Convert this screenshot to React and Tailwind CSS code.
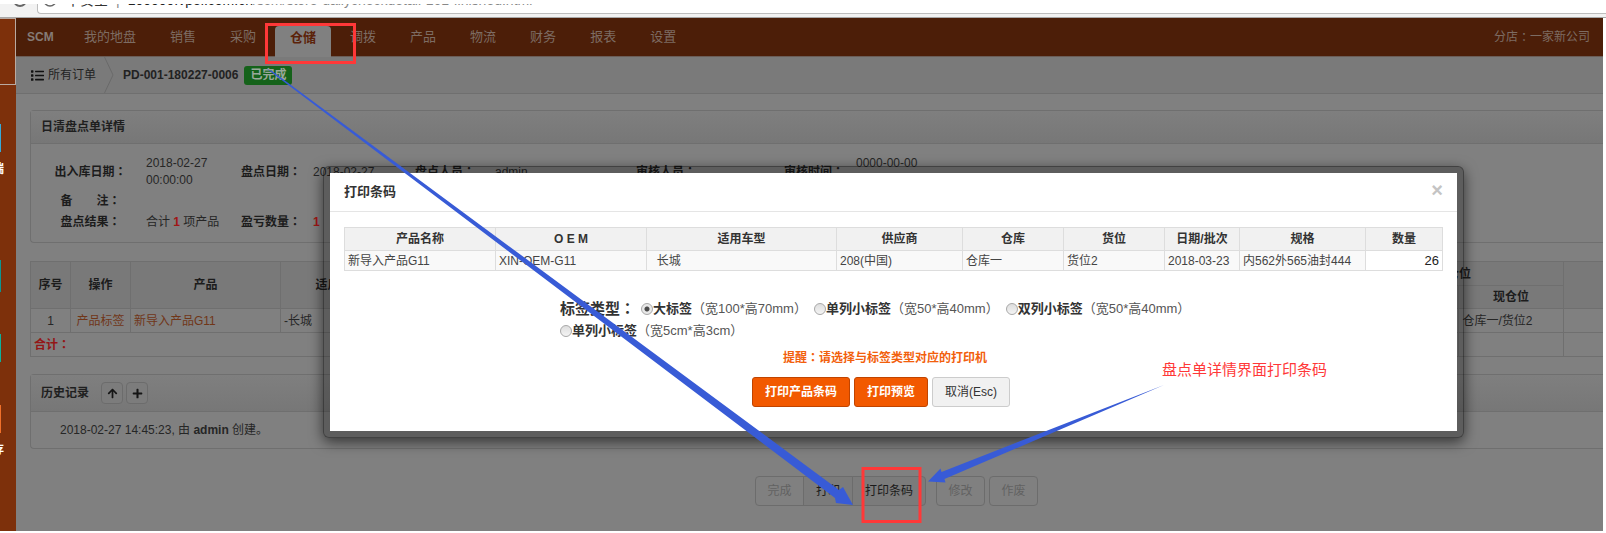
import React from "react";
import { FaList, FaArrowUp, FaPlus } from "react-icons/fa";

const NAV = ["我的地盘", "销售", "采购", "仓储", "调拨", "产品", "物流", "财务", "报表", "设置"];

function BrowserBar() {
  return (
    <div className="h-[18px] shrink-0 border-b border-[#a8a8a8] bg-white pt-1">
      <div className="flex h-[13px] overflow-hidden bg-[#f2f2f2]">
        <svg className="w-[37px] shrink-0" height="13" viewBox="0 0 37 13" fill="none" stroke="#666" strokeWidth="2">
          <circle cx="20" cy="-4" r="6" />
        </svg>
        <div className="flex h-[10px] flex-1 overflow-hidden rounded-bl border-b border-l border-[#bdbdbd] bg-white">
          <svg className="w-[28px] shrink-0" height="9" viewBox="0 0 28 9" fill="none" stroke="#666" strokeWidth="1.5">
            <circle cx="12" cy="-4" r="6" />
          </svg>
          <div className="-mt-[14px] flex h-5 items-center gap-2 whitespace-nowrap text-sm leading-5 text-[#888]">
            <span className="text-[#333]">不安全</span>
            <span>|</span>
            <span>
              <span className="text-[#222]">100000.vpei.com.cn</span>/scm/store-dailycheckdetail-161-finished.html
            </span>
          </div>
        </div>
      </div>
    </div>
  );
}

function Sidebar() {
  return (
    <aside className="flex w-4 shrink-0 flex-col overflow-hidden bg-[#7d300b] text-xs font-bold text-white">
      <div className="h-[67px] border-r border-b border-t border-[#b9aaa2]" />
      <div className="mt-[39px] h-7 w-px bg-[#35a9d8]" />
      <div className="mt-2 flex w-1 justify-end leading-[18px]">端</div>
      <div className="mt-[82px] h-8 w-px bg-[#0c9490]" />
      <div className="mt-[42px] h-7 w-px bg-[#0cb09a]" />
      <div className="mt-[43px] h-7 w-px bg-[#f0702a]" />
      <div className="mt-2 flex w-1 justify-end leading-[18px]">存</div>
    </aside>
  );
}

function Colon() {
  return <span className="font-['Noto_Sans_CJK_TC',sans-serif] leading-none">：</span>;
}

function NavBar() {
  return (
    <nav className="flex h-[39px] items-stretch border-b border-[#6b5d57] bg-[#4c1e08] text-[13px] text-[#7d6c63]">
      <a href="#scm" className="flex w-[51px] items-center pl-[11px] text-xs font-bold text-[#857b76]">SCM</a>
      {NAV.map((n) =>
        n === "仓储" ? (
          <a key={n} href="#nav" className="mx-0.5 mt-2 -mb-px flex items-center rounded-t-sm bg-[#808080] px-[15px] pb-2 font-bold text-[#5b2209]">{n}</a>
        ) : (
          <a key={n} href="#nav" className="flex items-center px-[17px]">{n}</a>
        )
      )}
      <span className="ml-auto flex items-center pr-[13px] text-xs">分店<Colon />一家新公司</span>
    </nav>
  );
}

function Breadcrumb() {
  return (
    <div className="flex h-[37px] items-center border-b border-[#6f6f6f] bg-[#7a7a7a] text-xs text-[#222]">
      <a href="#orders" className="flex w-[88px] items-center gap-1 pl-[15px] whitespace-nowrap">
        <FaList className="text-[13px] text-[#111]" />
        所有订单
      </a>
      <svg width="10" height="36" viewBox="0 0 10 36" fill="none" stroke="#6a6a6a"><path d="M0.5 0L9 18L0.5 36" /></svg>
      <strong className="ml-[9px]">PD-001-180227-0006</strong>
      <span className="ml-[6px] rounded-[3px] bg-[#15621a] px-[6px] font-bold leading-[19px] text-[#9aa89a]">已完成</span>
    </div>
  );
}

function Label({ children }) {
  return (
    <dt className="text-center font-bold whitespace-pre text-[#1c1c1c]">
      {children}
      <Colon />
    </dt>
  );
}

function Details() {
  return (
    <section className="mt-4 ml-[14px] rounded-l border border-r-0 border-[#6f6f6f]">
      <h2 className="flex h-[33px] items-center border-b border-[#6f6f6f] bg-linear-to-b from-[#7f7f7f] to-[#777777] pl-[10px] text-xs font-bold text-[#1f1f1f]">日清盘点单详情</h2>
      <dl className="grid grid-cols-[101px_94px_72px_94px_88px_133px_88px_68px_72px_94px] items-center gap-y-1 pt-[11px] pb-[11px] pl-[9px] leading-[17px]">
        <Label>出入库日期</Label>
        <dd className="pl-[5px]">2018-02-27<br />00:00:00</dd>
        <Label>盘点日期</Label>
        <dd className="pl-[6px]">2018-02-27</dd>
        <Label>盘点人员</Label>
        <dd className="pl-[6px]">admin</dd>
        <Label>审核人员</Label>
        <dd />
        <Label>审核时间</Label>
        <dd className="pl-[6px]">0000-00-00<br />00:00:00</dd>
        <Label>{"备　　注"}</Label>
        <dd className="col-span-9" />
        <Label>盘点结果</Label>
        <dd className="pl-[5px]">合计 <b className="text-[#a01616]">1</b> 项产品</dd>
        <Label>盈亏数量</Label>
        <dd className="pl-[6px] font-bold text-[#a01616]">1</dd>
      </dl>
    </section>
  );
}

function StockTable() {
  const c = "border border-[#6f6f6f] px-[3px]";
  return (
    <table className="mt-[18px] ml-[14px] w-[calc(100%-14px)] table-fixed border-collapse text-xs">
      <colgroup>
        <col className="w-[40px]" />
        <col className="w-[60px]" />
        <col className="w-[150px]" />
        <col className="w-[118px]" />
        <col />
        <col className="w-[104px]" />
        <col className="w-[104px]" />
        <col className="w-[40px]" />
      </colgroup>
      <thead className="bg-[#797979] text-[#1c1c1c]">
        <tr className="h-6">
          <th rowSpan={2} className={c}>序号</th>
          <th rowSpan={2} className={c}>操作</th>
          <th rowSpan={2} className={c}>产品</th>
          <th rowSpan={2} className={c}>适用车型</th>
          <th rowSpan={2} className={c} />
          <th colSpan={2} className={c}>仓位</th>
          <th rowSpan={2} className="border-y border-[#6f6f6f]" />
        </tr>
        <tr className="h-[23px]">
          <th className={c} />
          <th className={c}>现仓位</th>
        </tr>
      </thead>
      <tbody>
        <tr className="h-6">
          <td className="border border-[#6f6f6f] text-center">1</td>
          <td className="border border-[#6f6f6f] text-center"><a href="#label" className="text-[#703618]">产品标签</a></td>
          <td className={c}><a href="#product" className="text-[#703618]">新导入产品G11</a></td>
          <td className={c}>-长城</td>
          <td className={c} />
          <td className={c} />
          <td className={c}>仓库一/货位2</td>
          <td className="border-y border-[#6f6f6f]" />
        </tr>
        <tr className="h-6">
          <td colSpan={5} className="border border-[#6f6f6f] px-[3px] font-bold text-[#941616]">合计<Colon /></td>
          <td className={c} />
          <td className={c} />
          <td className="border-y border-[#6f6f6f]" />
        </tr>
      </tbody>
    </table>
  );
}

function History() {
  const b = "flex size-[22px] items-center justify-center rounded border border-[#6c6c6c] bg-[#7c7c7c] text-[11px] text-[#151515]";
  return (
    <section className="mt-[17px] ml-[14px] rounded-l border border-r-0 border-[#6f6f6f]">
      <div className="flex h-[37px] items-center gap-[3px] border-b border-[#6f6f6f] bg-linear-to-b from-[#7f7f7f] to-[#777777] pl-[10px]">
        <h2 className="mr-[9px] text-xs font-bold text-[#1f1f1f]">历史记录</h2>
        <button type="button" aria-label="排序" className={b}><FaArrowUp /></button>
        <button type="button" aria-label="展开" className={b}><FaPlus /></button>
      </div>
      <p className="pl-[29px] leading-9">2018-02-27 14:45:23, 由 <b>admin</b> 创建。</p>
    </section>
  );
}

function Actions() {
  const b = "h-[30px] border border-[#6c6c6c] bg-[#7b7b7b] px-[11px] text-xs text-[#1a1a1a] disabled:bg-transparent disabled:text-[#626262]";
  return (
    <div className="mt-[27px] ml-[739px] flex gap-1 whitespace-nowrap">
      <div className="mr-1.5 flex">
        <button type="button" disabled className={b + " w-[49px] rounded-l"}>完成</button>
        <button type="button" className={b + " w-[50px] -ml-px"}>打印</button>
        <button type="button" className={b + " w-[74px] -ml-px rounded-r"}>打印条码</button>
      </div>
      <button type="button" disabled className={b + " w-[49px] rounded"}>修改</button>
      <button type="button" disabled className={b + " w-[49px] rounded"}>作废</button>
    </div>
  );
}

function Option({ id, name, size, checked }) {
  return (
    <label htmlFor={id} className="mr-[7px] inline-flex h-[22px] items-center align-top text-[13px] text-[#555]">
      <input
        id={id}
        type="radio"
        name="label-type"
        defaultChecked={checked}
        className="size-3 appearance-none rounded-full border border-[#a8a8a8] bg-linear-to-b from-[#dedede] to-[#f4f4f4] checked:bg-[radial-gradient(circle,#4a4a4a_0_2px,#e8e8e8_3px)]"
      />
      <b className="text-[#333]">{name}</b>
      <span>（{size}）</span>
    </label>
  );
}

const COLS = [
  ["产品名称", "新导入产品G11", "w-[151px]"],
  ["O E M", "XIN-OEM-G11", "w-[151px]"],
  ["适用车型", "\u00a0\u00a0长城", "w-[190px]"],
  ["供应商", "208(中国)", "w-[126px]"],
  ["仓库", "仓库一", "w-[101px]"],
  ["货位", "货位2", "w-[101px]"],
  ["日期/批次", "2018-03-23", "w-[75px]"],
  ["规格", "内562外565油封444", "w-[126px]"],
];

function PrintDialog() {
  return (
    <div className="absolute top-[166px] right-[142px] left-[323px] rounded-md border border-black/30 bg-black/27 p-1.5 shadow-[0_4px_14px_rgba(0,0,0,0.6)]">
      <div role="dialog" aria-labelledby="dlg-title" className="bg-white pb-[24px]">
        <div className="flex h-[39px] items-center justify-between border-b border-[#e5e5e5] px-[14px]">
          <h1 id="dlg-title" className="text-[13px] font-bold text-[#333]">打印条码</h1>
          <button type="button" aria-label="关闭" className="pb-1 text-xl leading-none font-bold text-[#c4c4c4]">×</button>
        </div>
        <div className="px-[14px] pt-[15px]">
          <table className="w-full table-fixed border-collapse border border-[#ddd] text-xs text-[#444]">
            <thead className="bg-[#f1f1f1] text-[#333]">
              <tr className="h-[23px]">
                {COLS.map(([h, , w]) => (
                  <th key={h} className={"border border-[#ddd] " + w}>{h}</th>
                ))}
                <th className="border border-[#ddd]">数量</th>
              </tr>
            </thead>
            <tbody>
              <tr className="h-5 bg-[#f9f9f9]">
                {COLS.map(([h, v]) => (
                  <td key={h} className="border border-[#ddd] px-[3px] whitespace-nowrap">{v}</td>
                ))}
                <td className="border border-[#ddd] p-0">
                  <input aria-label="数量" defaultValue="26" className="block h-[19px] w-full bg-white px-[3px] text-right text-[13px] text-[#222]" />
                </td>
              </tr>
            </tbody>
          </table>
          <form className="mt-[27px] ml-[216px] max-w-[650px]">
            <fieldset className="leading-[22px]">
              <legend className="float-left mr-1.5 text-[15px] font-bold text-[#333]">标签类型<Colon /></legend>
              <Option id="t1" name="大标签" size="宽100*高70mm" checked />
              <Option id="t2" name="单列小标签" size="宽50*高40mm" />
              <Option id="t3" name="双列小标签" size="宽50*高40mm" />
              <br />
              <Option id="t4" name="单列小标签" size="宽5cm*高3cm" />
            </fieldset>
            <p className="mt-[8px] text-center text-xs leading-4 font-bold text-[#f2600c]">提醒<Colon />请选择与标签类型对应的打印机</p>
            <div className="mt-[11px] flex justify-center gap-1 pr-2 text-xs">
              <button type="button" className="h-[30px] rounded-[3px] border border-[#c04400] bg-[#f25900] px-3 font-bold text-white">打印产品条码</button>
              <button type="button" className="h-[30px] rounded-[3px] border border-[#c04400] bg-[#f25900] px-3 font-bold text-white">打印预览</button>
              <button type="button" className="h-[30px] rounded-[3px] border border-[#ccc] bg-[#f1f1f1] px-3 text-[#333]">取消(Esc)</button>
            </div>
          </form>
        </div>
      </div>
    </div>
  );
}

function Annotations() {
  return (
    <div className="pointer-events-none absolute top-0 left-0">
      <svg width="1200" height="531" viewBox="0 0 1200 531">
        <rect x="266.5" y="24.5" width="88" height="38" fill="none" stroke="#ff3838" strokeWidth="3" />
        <rect x="863" y="468.5" width="57" height="53" fill="none" stroke="#ff3838" strokeWidth="3" />
        <g fill="#385bd6">
          <polygon points="267,69 272,71 839,490 843,487 853,505 836,503 835,498 271,72" />
          <polygon points="1164,385 944.5,479 945.5,482.5 928,481.5 940.5,468.5 941.5,472" />
        </g>
      </svg>
      <p className="absolute top-[360px] left-[1162px] text-[15px] leading-5 whitespace-nowrap text-[#ff3838]">盘点单详情界面打印条码</p>
    </div>
  );
}

export default function App() {
  return (
    <div className="relative flex min-h-screen flex-col overflow-hidden bg-white pb-0.5 font-['Liberation_Sans','Noto_Sans_CJK_SC',sans-serif] text-xs text-[#262626]">
      <BrowserBar />
      <div className="mr-[3px] flex flex-1">
        <Sidebar />
        <main className="min-w-0 flex-1 bg-[#808080]">
          <NavBar />
          <Breadcrumb />
          <Details />
          <StockTable />
          <History />
          <Actions />
        </main>
      </div>
      <PrintDialog />
      <Annotations />
    </div>
  );
}
